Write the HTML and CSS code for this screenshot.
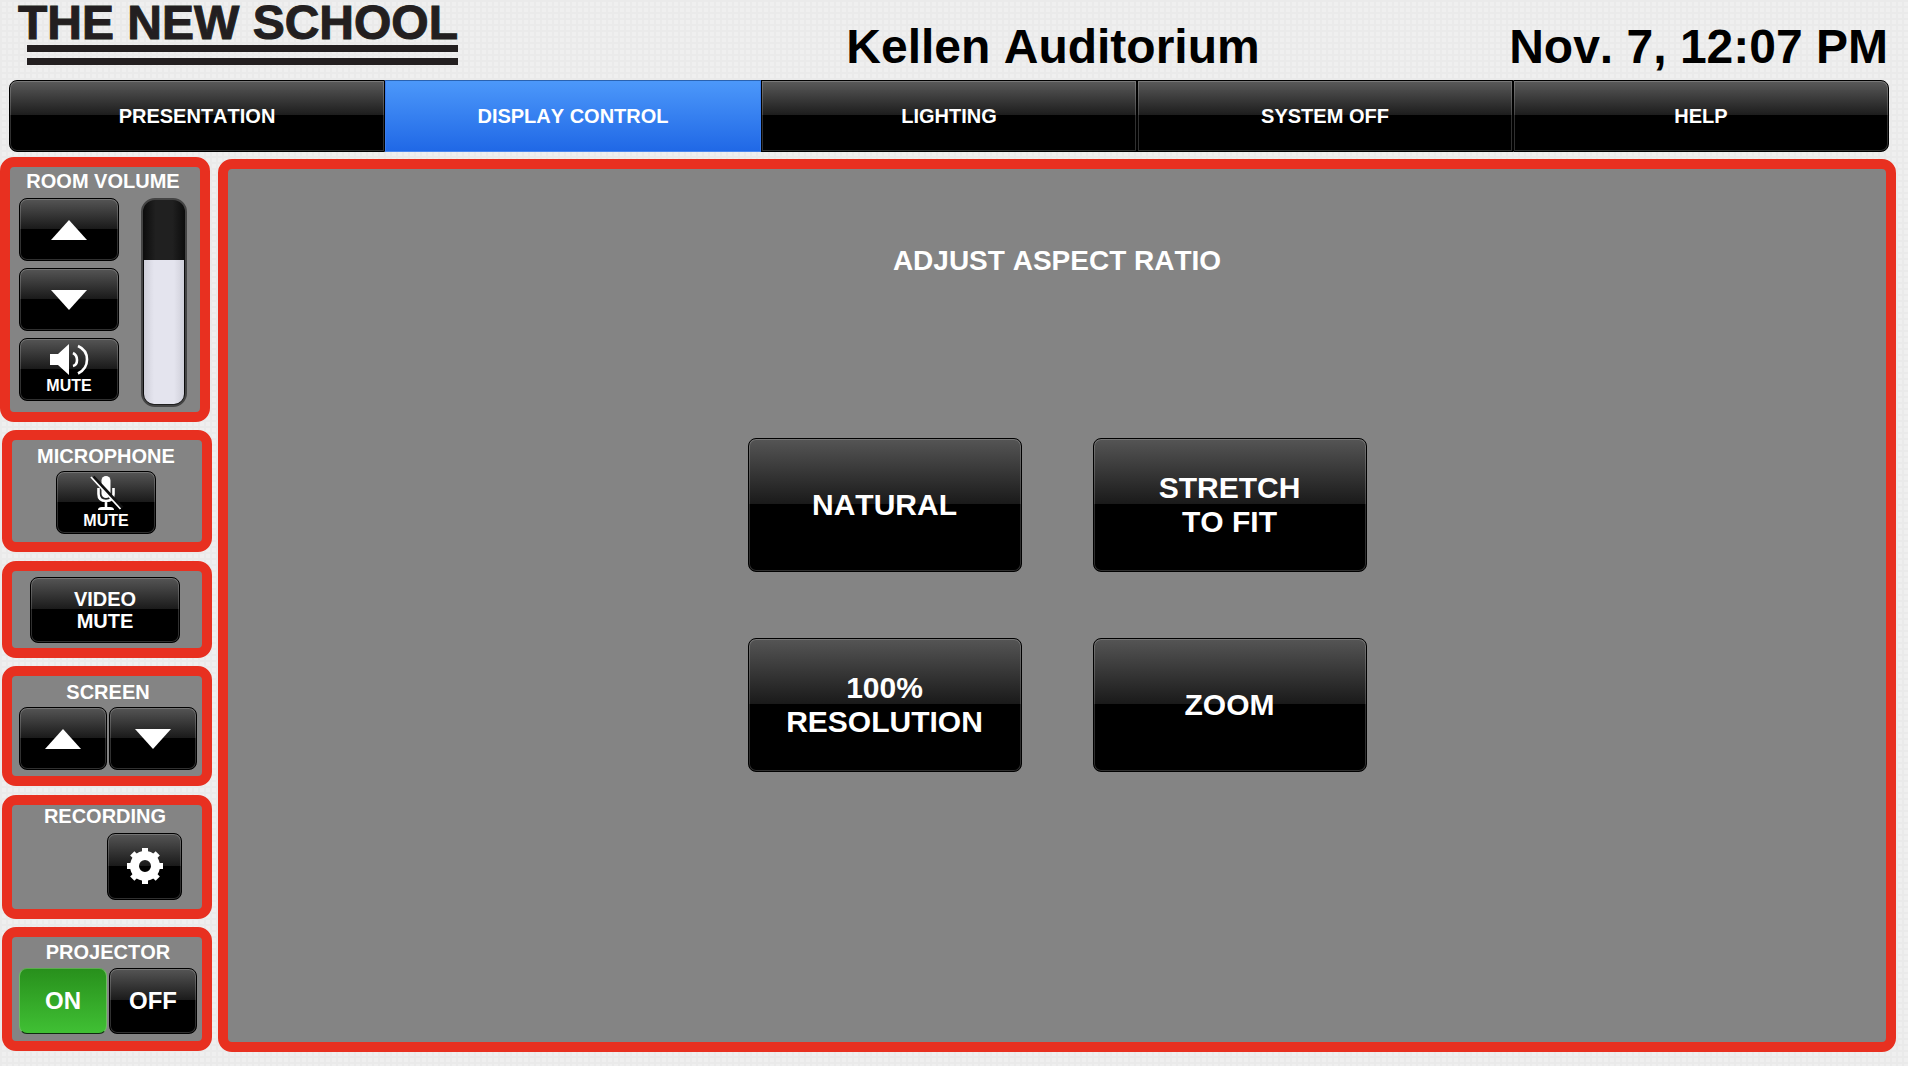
FILE: index.html
```html
<!DOCTYPE html>
<html lang="en">
<head>
<meta charset="utf-8">
<title>Kellen Auditorium</title>
<link rel="stylesheet" href="styles.css">
</head>
<body>
<div class="page">
  <header class="header">
    <div class="logo">THE NEW SCHOOL</div>
    <h1 class="room">Kellen Auditorium</h1>
    <time class="clock">Nov. 7, 12:07 PM</time>
  </header>

  <nav class="tabs">
    <button class="tab">PRESENTATION</button>
    <button class="tab active">DISPLAY CONTROL</button>
    <button class="tab">LIGHTING</button>
    <button class="tab">SYSTEM OFF</button>
    <button class="tab">HELP</button>
  </nav>

  <div class="body">
    <aside class="sidebar">
      <section class="panel volume">
        <h2 class="label">ROOM VOLUME</h2>
        <div class="volume-controls">
          <div class="stack">
            <button class="key" aria-label="Volume up"><svg width="36" height="20" viewBox="0 0 36 20"><path fill="#fff" d="M18 0 36 20H0z"/></svg></button>
            <button class="key" aria-label="Volume down"><svg width="36" height="20" viewBox="0 0 36 20"><path fill="#fff" d="M0 0h36L18 20z"/></svg></button>
            <button class="key icon-key">
              <svg width="38" height="31" viewBox="0 0 38 31"><path fill="#fff" d="M0 10h8L19 0v31L8 21H0z"/><path fill="none" stroke="#fff" stroke-width="2.6" d="M23 9q4 2 4 7t-4 6M28 2q9 4 9 13.500t-9 14"/></svg>
              MUTE
            </button>
          </div>
          <div class="gauge"><div class="gauge-fill" style="height: 71%"></div></div>
        </div>
      </section>

      <section class="panel microphone">
        <h2 class="label">MICROPHONE</h2>
        <button class="key icon-key">
          <svg width="30" height="34" viewBox="0 0 30 34"><rect x="10.500" y="0" width="9" height="22" rx="4.500" fill="#fff"/><path fill="none" stroke="#fff" stroke-width="2.600" d="M7.500 12v6q0 7 7.500 7t7.500-7v-6M15 25v7"/><path fill="#fff" d="M7 34q0-3 4-3h8q4 0 4 3z"/><path stroke="#111" stroke-width="4" d="M2 1 31 32"/><path stroke="#fff" stroke-width="1.800" d="M0 1 29.500 33"/></svg>
          MUTE
        </button>
      </section>

      <section class="panel video">
        <button class="key wide-key">VIDEO<br>MUTE</button>
      </section>

      <section class="panel screen">
        <h2 class="label">SCREEN</h2>
        <div class="pair">
          <button class="key" aria-label="Screen up"><svg width="36" height="20" viewBox="0 0 36 20"><path fill="#fff" d="M18 0 36 20H0z"/></svg></button>
          <button class="key" aria-label="Screen down"><svg width="36" height="20" viewBox="0 0 36 20"><path fill="#fff" d="M0 0h36L18 20z"/></svg></button>
        </div>
      </section>

      <section class="panel recording">
        <h2 class="label">RECORDING</h2>
        <button class="key gear-key" aria-label="Recording settings">
          <svg width="36" height="36" viewBox="-18 -18 36 36"><circle r="10.500" fill="none" stroke="#fff" stroke-width="9"/><g fill="#fff"><path id="tooth" d="M-3-18h6v5h-6z"/><use href="#tooth" transform="rotate(45)"/><use href="#tooth" transform="rotate(90)"/><use href="#tooth" transform="rotate(135)"/><use href="#tooth" transform="rotate(180)"/><use href="#tooth" transform="rotate(225)"/><use href="#tooth" transform="rotate(270)"/><use href="#tooth" transform="rotate(315)"/></g></svg>
        </button>
      </section>

      <section class="panel projector">
        <h2 class="label">PROJECTOR</h2>
        <div class="pair">
          <button class="key power on">ON</button>
          <button class="key power">OFF</button>
        </div>
      </section>
    </aside>

    <main class="panel main">
      <h2 class="title">ADJUST ASPECT RATIO</h2>
      <div class="choices">
        <button class="key choice">NATURAL</button>
        <button class="key choice">STRETCH<br>TO FIT</button>
        <button class="key choice">100%<br>RESOLUTION</button>
        <button class="key choice">ZOOM</button>
      </div>
    </main>
  </div>
</div>
</body>
</html>
```
FILE: styles.css
```css
*,
*::after {
  box-sizing: border-box;
}

body {
  margin: 0;
  background: #fff;
  font-family: "Liberation Sans", Arial, sans-serif;
  font-weight: bold;
  font-kerning: none;
}

h1,
h2 {
  margin: 0;
  font-size: inherit;
}

svg {
  display: block;
  overflow: visible;
}

.page {
  display: flex;
  flex-direction: column;
  min-height: calc(100vh - 4px);
  margin: 0 6px 4px 0;
  padding-bottom: 14px;
  background-color: #efefef;
  background-image:
    linear-gradient(#eaeaea 2px, transparent 2px),
    linear-gradient(90deg, #eaeaea 2px, transparent 2px);
  background-size: 6px 6px;
}

/* Header: the room name is centred over the main panel */

.header {
  display: grid;
  grid-template-columns: 200px 1fr auto 1fr;
  height: 80px;
  padding: 0 20px 0 18px;
  color: #000;
  font-size: 48px;
  line-height: 56px;
}

.logo {
  grid-column: 1 / span 2;
  justify-self: start;
  color: #231f20;
  line-height: 45px;
  white-space: nowrap;
  -webkit-text-stroke: 1px #231f20;
}

.logo::after {
  content: "";
  display: block;
  height: 20px;
  margin-left: 9px;
  border: solid #231f20;
  border-width: 7px 0;
}

.room,
.clock {
  padding-top: 19px;
  white-space: nowrap;
}

.clock {
  justify-self: end;
}

/* Tabs */

.tabs {
  display: flex;
  margin: 0 19px 0 9px;
}

.tab {
  flex: 1;
  height: 72px;
  padding: 0;
  border: 1px solid #000;
  background: linear-gradient(#5a5a5a, #1c1c1c 49%, #000 49%);
  box-shadow: inset 0 0 0 1px #ffffff30;
  color: #fff;
  font: inherit;
  font-size: 20px;
}

.tab:first-child {
  border-radius: 8px 0 0 8px;
}

.tab:last-child {
  border-radius: 0 8px 8px 0;
}

.tab.active {
  border-color: #2a62b0 #3a7cec #4a86ee;
  background: linear-gradient(#4c98fa, #2068e6);
  box-shadow: none;
}

/* Panels */

.body {
  display: flex;
  flex: 1;
  gap: 6px;
  padding-right: 12px;
}

.sidebar {
  display: flex;
  flex-direction: column;
  align-items: flex-end;
  justify-content: space-between;
  gap: 8px;
  width: 212px;
  padding: 5px 0 1px;
}

.panel {
  display: flex;
  flex-direction: column;
  align-items: center;
  border: 10px solid #e83020;
  border-radius: 14px;
  background: #848484;
  color: #fff;
}

.sidebar .panel {
  width: 210px;
}

.label {
  font-size: 20px;
  line-height: 22px;
}

.key {
  display: flex;
  align-items: center;
  justify-content: center;
  width: 100px;
  height: 63px;
  padding: 0;
  border: 1px solid #000;
  border-radius: 8px;
  background: linear-gradient(#555, #1a1a1a 49%, #000 49%);
  box-shadow: inset 0 0 0 1px #ffffff30;
  color: #fff;
  font: inherit;
}

.icon-key {
  flex-direction: column;
  gap: 2px;
  font-size: 16px;
  line-height: 18px;
}

.sidebar .volume {
  align-self: flex-start;
  gap: 6px;
  padding: 3px 13px 5px 9px;
}

.volume-controls {
  display: flex;
  gap: 22px;
}

.stack {
  display: flex;
  flex-direction: column;
  gap: 7px;
}

.gauge {
  display: flex;
  align-items: flex-end;
  width: 46px;
  height: 209px;
  padding: 1px;
  overflow: hidden;
  border: 2px solid #444;
  border-radius: 14px;
  background: linear-gradient(90deg, #0c0c0c, #202020 30%, #202020 70%, #0c0c0c);
}

.gauge-fill {
  flex: 1;
  border-radius: 0 0 10px 10px;
  background: linear-gradient(90deg, #cfcfd9, #e4e4ee 25%, #e4e4ee 75%, #cfcfd9);
}

.microphone {
  gap: 4px;
  padding: 5px 2px 8px 0;
}

.video {
  padding: 6px 4px 5px 0;
}

.wide-key {
  width: 150px;
  height: 66px;
  font-size: 20px;
  line-height: 22px;
}

.screen {
  gap: 4px;
  padding: 5px 5px 6px 7px;
}

.pair {
  display: flex;
  gap: 2px;
}

.pair .key {
  width: 88px;
}

.recording {
  gap: 6px;
  padding: 0 4px 9px 0;
}

.gear-key {
  align-self: flex-end;
  width: 75px;
  height: 67px;
  margin-right: 16px;
}

.projector {
  gap: 5px;
  padding: 4px 5px 7px 7px;
}

.pair .power {
  height: 66px;
  font-size: 24px;
}

.power.on {
  border-color: #5cae50 #6cc060 #102a10;
  background: linear-gradient(#28901c, #40c034);
  box-shadow: none;
}

/* Display control */

.main {
  flex: 1;
  gap: 161px;
  margin-top: 7px;
  padding-top: 76px;
}

.title {
  font-size: 28px;
  line-height: 32px;
}

.choices {
  display: grid;
  grid-template-columns: auto auto;
  gap: 66px 71px;
}

.choice {
  width: 274px;
  height: 134px;
  font-size: 30px;
  line-height: 34px;
}
```
